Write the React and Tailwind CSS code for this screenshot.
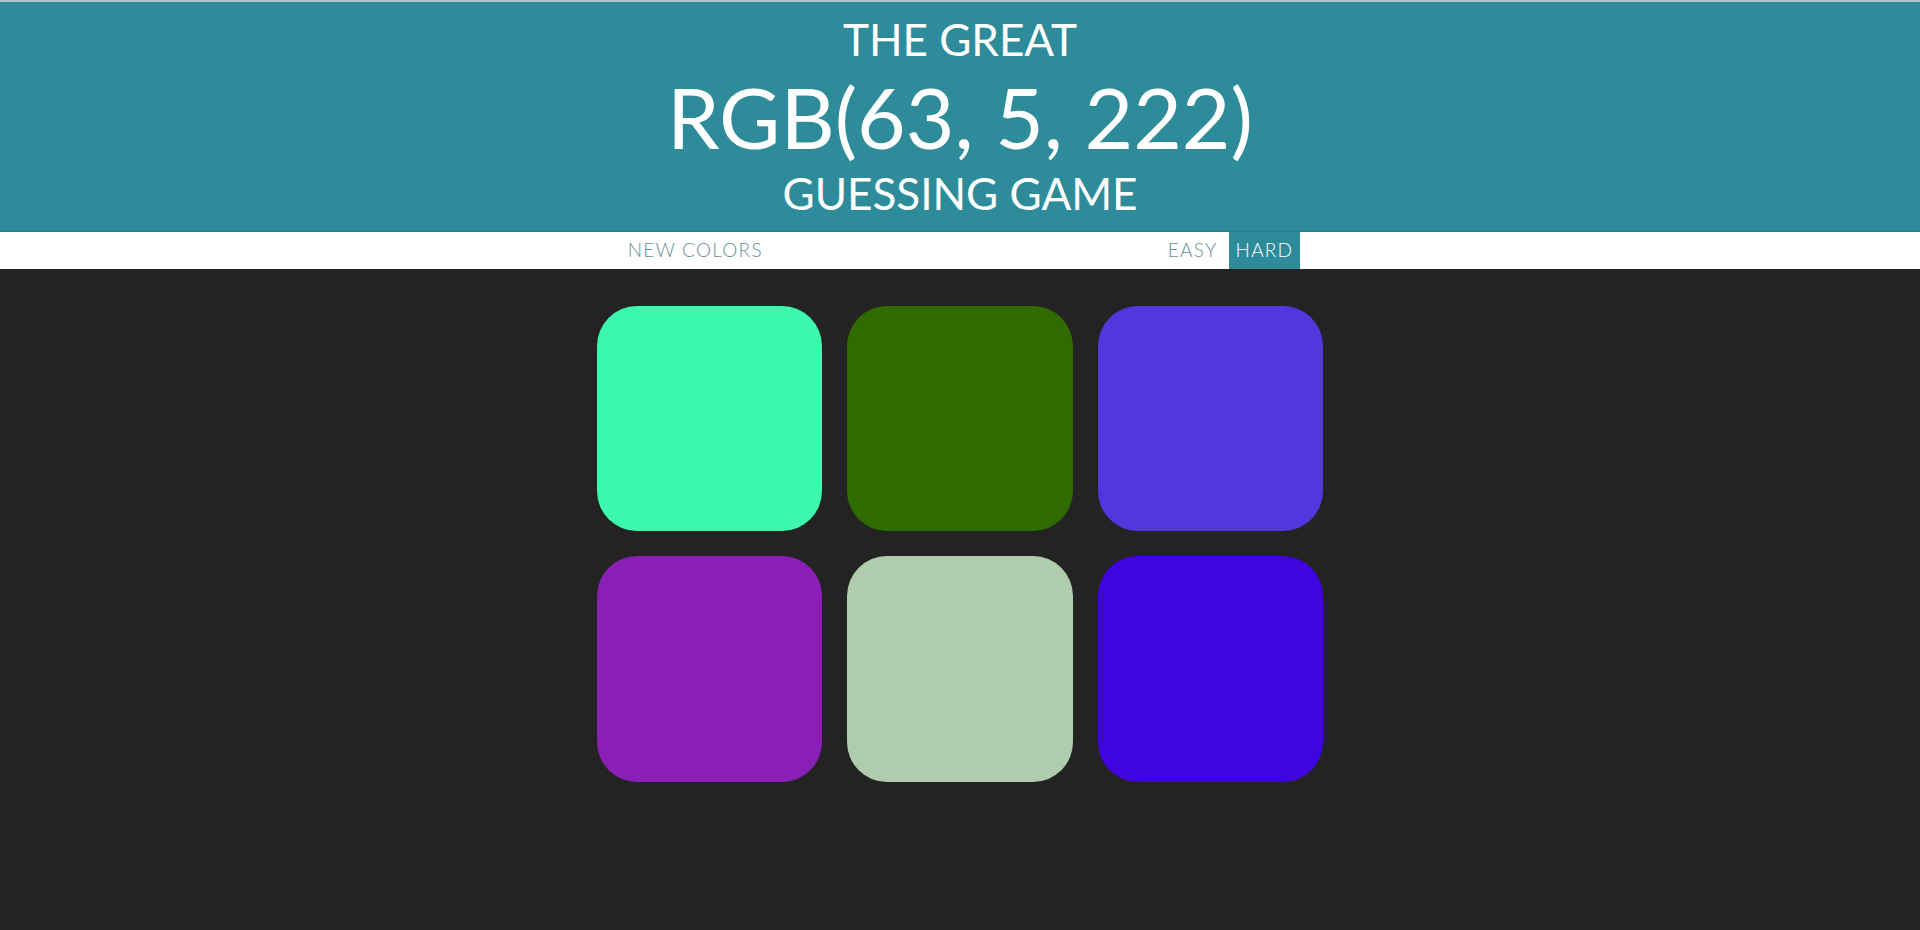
import React from "react";

const colors = [
  "#3cf9ae",
  "#306b00",
  "#5038dc",
  "#8a1fb5",
  "#afcdad",
  "#3f05de",
];

export default function App() {
  return (
    <div
      className="min-h-[930px] bg-[#232323]"
      style={{ fontFamily: "Lato, 'Open Sans', sans-serif" }}
    >
      <div className="h-[2px] bg-[#a9c3c7]" />
      <h1 className="bg-[#2e8c9a] py-[11px] text-center font-normal uppercase text-white">
        <span className="block text-[44px] leading-[53px]">The Great</span>
        <span className="block text-[84px] leading-[101px]">RGB(63, 5, 222)</span>
        <span className="block text-[44px] leading-[53px]">Guessing Game</span>
      </h1>
      <div className="flex h-[38px] items-stretch justify-center border-t border-[#2a7f8c] bg-white text-[19px] tracking-[1.25px]">
        <button className="px-[8px] font-light uppercase text-[#6a9096]">New Colors</button>
        <span className="w-[20%]" />
        <button className="ml-[6px] px-[7px] font-light uppercase text-[#6a9096]">Easy</button>
        <button className="ml-[4px] bg-[#2e8c9a] px-[7px] font-light uppercase text-white">Hard</button>
      </div>
      <div className="mx-auto mt-[25px] grid w-[750px] grid-cols-3 gap-[25px] p-[12px]">
        {colors.map((c) => (
          <div
            key={c}
            className="aspect-square rounded-[40px]"
            style={{ backgroundColor: c }}
          />
        ))}
      </div>
    </div>
  );
}
